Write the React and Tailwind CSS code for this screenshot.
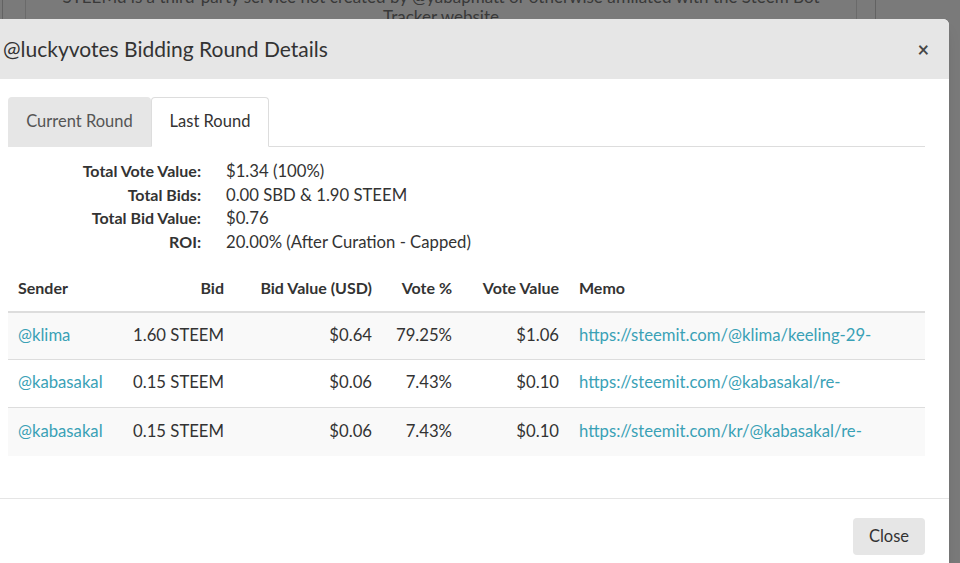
const STATS = [
  { label: 'Total Vote Value:', value: '$1.34 (100%)' },
  { label: 'Total Bids:', value: '0.00 SBD & 1.90 STEEM' },
  { label: 'Total Bid Value:', value: '$0.76' },
  { label: 'ROI:', value: '20.00% (After Curation - Capped)' },
];

const BIDS = [
  { sender: '@klima', bid: '1.60 STEEM', usd: '$0.64', pct: '79.25%', vote: '$1.06', memo: 'https://steemit.com/@klima/keeling-29-' },
  { sender: '@kabasakal', bid: '0.15 STEEM', usd: '$0.06', pct: '7.43%', vote: '$0.10', memo: 'https://steemit.com/@kabasakal/re-' },
  { sender: '@kabasakal', bid: '0.15 STEEM', usd: '$0.06', pct: '7.43%', vote: '$0.10', memo: 'https://steemit.com/kr/@kabasakal/re-' },
];

function Tabs() {
  return (
    <div className="flex border-b border-[#ddd]">
      <button className="-mb-px h-[50px] w-[143px] rounded-t bg-[#e6e6e6] pb-[2px] text-[16.5px] text-[#555]">Current Round</button>
      <button className="-mb-px h-[50px] w-[118px] rounded-t border border-[#ddd] border-b-white bg-white pb-[2px] text-[16.5px] text-[#333]">
        Last Round
      </button>
    </div>
  );
}

function Stats() {
  return (
    <div className="mt-[12px] grid grid-cols-[193px_1fr] gap-x-[25px] text-[#333]">
      {STATS.map((s) => (
        <div key={s.label} className="contents">
          <span className="text-right text-[16px] font-bold leading-[23.7px]">{s.label}</span>
          <span className="pt-[2px] text-[16.7px] leading-[21.7px]">{s.value}</span>
        </div>
      ))}
    </div>
  );
}

function BidTable() {
  return (
    <table className="mt-[11px] w-full table-fixed border-collapse text-[16.7px] text-[#333]">
      <colgroup>
        <col className="w-[112px]" />
        <col className="w-[114px]" />
        <col className="w-[148px]" />
        <col className="w-[80px]" />
        <col className="w-[107px]" />
        <col />
      </colgroup>
      <thead>
        <tr className="h-[47px] border-b-2 border-[#ddd] text-[16px] font-bold">
          <th className="px-[10px] text-left">Sender</th>
          <th className="px-[10px] text-right">Bid</th>
          <th className="px-[10px] text-right">Bid Value (USD)</th>
          <th className="px-[10px] text-right">Vote %</th>
          <th className="px-[10px] text-right">Vote Value</th>
          <th className="px-[10px] text-left">Memo</th>
        </tr>
      </thead>
      <tbody>
        {BIDS.map((b, i) => (
          <tr key={i} className={`h-[48px] border-t border-[#ddd] first:border-t-0 ${i % 2 === 0 ? 'bg-[#f9f9f9]' : 'bg-white'}`}>
            <td className="px-[10px] pb-[2px] text-[#3aa1b6]">{b.sender}</td>
            <td className="px-[10px] pb-[2px] text-right">{b.bid}</td>
            <td className="px-[10px] pb-[2px] text-right">{b.usd}</td>
            <td className="px-[10px] pb-[2px] text-right">{b.pct}</td>
            <td className="px-[10px] pb-[2px] text-right">{b.vote}</td>
            <td className="truncate px-[10px] pb-[2px] text-[#3aa1b6]">{b.memo}</td>
          </tr>
        ))}
      </tbody>
    </table>
  );
}

export default function App() {
  return (
    <div className="relative h-[563px] w-[960px] overflow-hidden bg-white font-['Lato',sans-serif]">
      {/* page underneath the dialog */}
      <div className="ml-[2px] h-full w-[874px] border-x border-[#ccc] pl-[22px] pr-[18px]">
        <div className="h-full border-x border-[#ddd]">
          <p className="-mt-[13px] text-center text-[17px] leading-[20px] text-[#777]">
            STEEMd is a third-party service not created by @yabapmatt or otherwise affiliated with the Steem Bot
            <br />
            Tracker website
          </p>
        </div>
      </div>

      {/* backdrop */}
      <div className="absolute inset-0 bg-black/[0.52]" />

      {/* dialog */}
      <div className="absolute left-[-12px] top-[19px] w-[961px] rounded-t-md bg-white shadow-lg">
        <div className="flex h-[60px] items-center justify-between rounded-t-md bg-[#e6e6e6] pl-[15px] pr-[20px]">
          <h4 className="text-[21px] text-[#333]">@luckyvotes Bidding Round Details</h4>
          <button className="text-[20px] font-bold leading-none text-black/70">×</button>
        </div>

        <div className="pl-[20px] pr-[24px] pt-[18px] pb-[42px]">
          <Tabs />
          <Stats />
          <BidTable />
        </div>

        <div className="flex justify-end border-t border-[#e5e5e5] pr-[24px] pt-[19px] pb-[20px]">
          <button className="h-[37px] w-[72px] rounded bg-[#e6e6e6] text-[16.5px] text-[#333]">Close</button>
        </div>
      </div>
    </div>
  );
}
